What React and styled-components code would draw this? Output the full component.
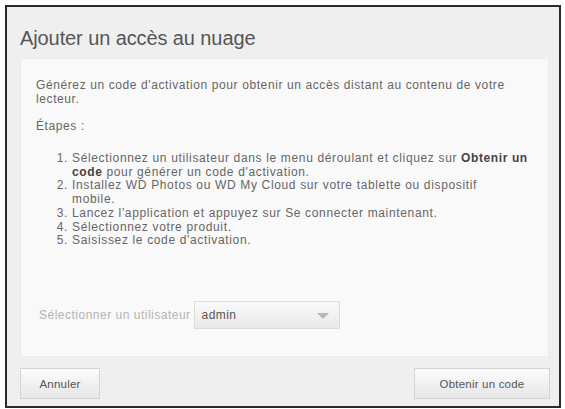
import React from "react";
import styled, { createGlobalStyle } from "styled-components";

const GlobalStyle = createGlobalStyle`
  html, body {
    margin: 0;
    padding: 0;
    background: #ffffff;
  }
  body {
    font-family: "Liberation Sans", Arial, sans-serif;
  }
`;

const Page = styled.div`
  padding: 5px 0 0 5px;
`;

const Dialog = styled.div`
  width: 552px;
  height: 399px;
  border: 2px solid #2b2b2b;
  background-color: #efefef;
  display: flex;
  flex-direction: column;
`;

const Title = styled.h1`
  margin: 0;
  height: 51px;
  padding: 12px 0 0 13px;
  box-sizing: border-box;
  display: flex;
  align-items: center;
  font-size: 20px;
  font-weight: normal;
  color: #555;
  letter-spacing: -0.1px;
`;

const Panel = styled.div`
  margin: 0 10px 0 13px;
  height: 299px;
  box-sizing: border-box;
  padding: 19px 15px 0 15px;
  background-color: #f9f9f9;
  border: 1px solid #ebebeb;
  color: #666;
  font-size: 12px;
  letter-spacing: 0.6px;
`;

const Paragraph = styled.p`
  margin: 0;
  line-height: 14px;
  white-space: nowrap;
`;

const Steps = styled.p`
  margin: 13px 0 0 0;
  line-height: 14px;
`;

const List = styled.ol`
  margin: 19px 0 0 0;
  padding: 0 0 0 36px;
  line-height: 13.7px;
  white-space: nowrap;
`;

const Item = styled.li`
  letter-spacing: 0.65px;
`;

const Strong = styled.b`
  color: #444;
  font-weight: bold;
  letter-spacing: 0.6px;
`;

const SelectRow = styled.div`
  margin-top: 53px;
  display: flex;
  align-items: center;
  padding-left: 3px;
`;

const Label = styled.span`
  color: #b4b4b4;
  font-size: 12px;
  letter-spacing: 0.5px;
  margin-right: 3px;
`;

const SelectBox = styled.div`
  width: 146px;
  height: 28px;
  box-sizing: border-box;
  border: 1px solid #dcdcdc;
  background: linear-gradient(#fafafa, #e9e9e9);
  display: flex;
  align-items: center;
  justify-content: space-between;
  padding: 0 10px 0 7px;
  color: #555;
  font-size: 12px;
  letter-spacing: 0.4px;
`;

const Arrow = styled.span`
  width: 0;
  height: 0;
  border-left: 6px solid transparent;
  border-right: 6px solid transparent;
  border-top: 6px solid #b8b8b8;
  margin-top: 2px;
`;

const Footer = styled.div`
  flex: 1;
  display: flex;
  justify-content: space-between;
  align-items: flex-start;
  padding: 11px 9px 0 13px;
`;

const Button = styled.button`
  height: 31px;
  width: ${(p) => p.$width}px;
  box-sizing: border-box;
  border: 1px solid #d4d4d4;
  background: linear-gradient(#fcfcfc, #e6e6e6);
  color: #555;
  font-family: "Liberation Sans", Arial, sans-serif;
  font-size: 11.5px;
  letter-spacing: 0.2px;
  padding: 0;
  cursor: pointer;
`;

export default function App() {
  return (
    <>
      <GlobalStyle />
      <Page>
        <Dialog>
          <Title>Ajouter un accès au nuage</Title>
          <Panel>
            <Paragraph>
              Générez un code d'activation pour obtenir un accès distant au contenu de votre
              <br />
              lecteur.
            </Paragraph>
            <Steps>Étapes :</Steps>
            <List>
              <Item>
                Sélectionnez un utilisateur dans le menu déroulant et cliquez sur <Strong>Obtenir un</Strong>
                <br />
                <Strong>code</Strong> pour générer un code d'activation.
              </Item>
              <Item>
                Installez WD Photos ou WD My Cloud sur votre tablette ou dispositif
                <br />
                mobile.
              </Item>
              <Item>Lancez l'application et appuyez sur Se connecter maintenant.</Item>
              <Item>Sélectionnez votre produit.</Item>
              <Item>Saisissez le code d'activation.</Item>
            </List>
            <SelectRow>
              <Label>Sélectionner un utilisateur</Label>
              <SelectBox>
                <span>admin</span>
                <Arrow />
              </SelectBox>
            </SelectRow>
          </Panel>
          <Footer>
            <Button $width={80}>Annuler</Button>
            <Button $width={136}>Obtenir un code</Button>
          </Footer>
        </Dialog>
      </Page>
    </>
  );
}
